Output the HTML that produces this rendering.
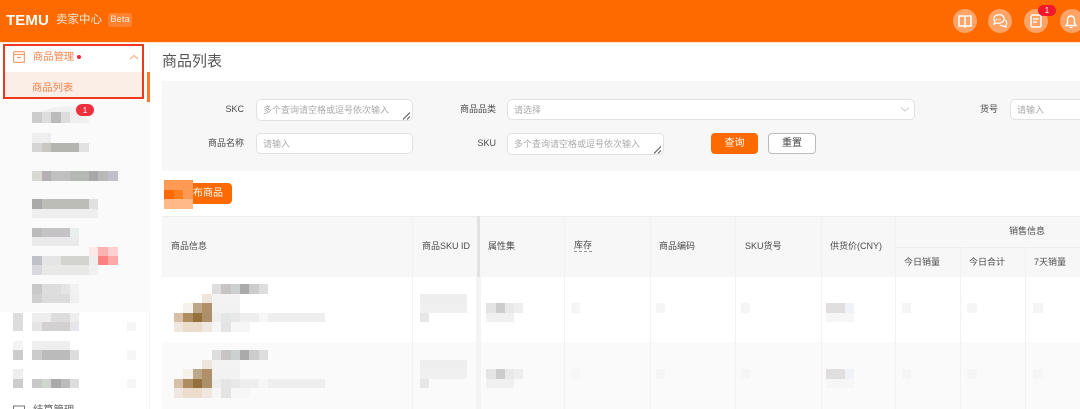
<!DOCTYPE html>
<html lang="zh"><head><meta charset="utf-8"><title>商品列表</title>
<style>
html,body{margin:0;padding:0;background:#fff}
#p{position:relative;width:1080px;height:409px;overflow:hidden;background:#fff;font-family:"Liberation Sans","Noto Sans CJK SC",sans-serif;color:#555;filter:blur(.35px)}
#p div,#p svg{position:absolute}
.t{white-space:nowrap;font-size:9px;line-height:12px;color:#4a4a4a}
.l{text-align:right;width:60px}
.i{background:#fff;border:1px solid #e2e2e2;border-radius:5px;box-sizing:border-box;color:#aaa;font-size:9px;line-height:20px;padding-left:6px;white-space:nowrap;overflow:hidden}
.v{top:216px;width:1px;height:193px;background:#f2f2f2}
.c{top:240px}
</style></head><body><div id="p">
<div style="left:0;top:0;width:1080px;height:42px;background:#ff6a00"></div>
<div style="left:0;top:42px;width:1080px;height:1px;background:#ffe3cf"></div>
<div class="t" style="left:6px;top:12px;font:bold 15px/17px 'Liberation Sans',sans-serif;color:#fff;letter-spacing:.1px">TEMU</div>
<div class="t" style="left:56px;top:12px;font-size:11.500px;line-height:17px;color:#ffe9d9">卖家中心</div>
<div class="t" style="left:108px;top:13px;width:24px;height:14px;background:#ff8230;border-radius:3px;color:#ffe9d9;font-size:9.500px;line-height:14px;text-align:center">Beta</div>
<svg style="left:950px;top:0" width="130" height="42" viewBox="950 0 130 42" fill="none">
<circle cx="965" cy="21" r="12" fill="#ffa366"/><circle cx="1000" cy="21" r="12" fill="#ffa366"/><circle cx="1036" cy="21" r="12" fill="#ffa366"/><circle cx="1072" cy="21" r="12" fill="#ffa366"/>
<path d="M959 16h5l1 1 1-1h5v10h-5l-1 1-1-1h-5zM965 17v9" stroke="#fff" stroke-width="1.600"/>
<path d="M995 16c3-2 8-2 9 2 1 3-3 6-7 5l-3 1 1-3c-2-1-1-4 0-5z" stroke="#fff" stroke-width="1.300"/><path d="M1005 20c2 1 2 4 1 5l0 2-3-1c-1 0-2 0-3-1" stroke="#fff" stroke-width="1.200"/>
<path d="M996 19.500h5" stroke="#fff" stroke-width="1.300" stroke-dasharray="1.200 1"/>
<rect x="1031" y="15" width="10" height="12" rx="1.500" stroke="#fff" stroke-width="1.500"/><path d="M1033 19h6M1033 22h4" stroke="#fff" stroke-width="1.200"/>
<path d="M1071 16c2.500 0 3.500 2 3.500 4.500v3l1.500 2h-10l1.500-2v-3c0-2.500 1-4.500 3.500-4.500z" stroke="#fff" stroke-width="1.500"/><path d="M1069.500 27.500h3" stroke="#fff" stroke-width="1.300"/>
</svg>
<div class="t" style="left:1038px;top:5px;width:18px;height:11px;border-radius:6px;background:#f0182d;color:#fff;font-size:8px;line-height:11px;text-align:center">1</div>

<div style="left:0;top:100px;width:149px;height:212px;background:#fafafa"></div>
<div style="left:149px;top:43px;width:1px;height:366px;background:#f5f5f5"></div>
<div style="left:147px;top:72px;width:3px;height:30px;background:#ff7a22"></div>
<div style="left:4px;top:72px;width:138px;height:26px;background:#fbeee6"></div>
<div style="left:3px;top:44px;width:141px;height:55px;box-sizing:border-box;border:2px solid #ee3a1c"></div>
<svg style="left:12px;top:50px" width="14" height="14" fill="none" stroke="#f2a070" stroke-width="1.200"><rect x="1.600" y="1.600" width="10.800" height="10.800" rx="1"/><path d="M1.600 4.500h10.800M5 7.500h4"/></svg>
<div class="t" style="left:33px;top:50px;font-size:10.300px;line-height:15px;color:#f5824a">商品管理</div>
<div style="left:77px;top:55px;width:4px;height:4px;border-radius:50%;background:#f0263a"></div>
<svg style="left:129px;top:54px" width="10" height="7" fill="none" stroke="#f8b48c" stroke-width="1.200"><path d="M1 5l4-3.500 4 3.500"/></svg>
<div class="t" style="left:32px;top:81px;font-size:10.300px;line-height:15px;color:#f5824a">商品列表</div>

<svg style="left:0;top:0" width="1080" height="409" shape-rendering="crispEdges">
<path d="M40 112q20-8 40-5l10 16H32z" fill="#f1f0f0"/>
<g>
<rect x="32" y="112" width="10" height="11" fill="#ccc"/><rect x="42" y="112" width="9" height="11" fill="#ddd"/><rect x="51" y="112" width="10" height="11" fill="#bbb"/><rect x="61" y="112" width="9" height="11" fill="#ddd"/><rect x="70" y="112" width="10" height="11" fill="#eee"/>
<rect x="32" y="133" width="19" height="10" fill="#eee"/><rect x="32" y="143" width="10" height="9" fill="#d5d5d5"/><rect x="42" y="143" width="9" height="9" fill="#c8c8c0"/><rect x="51" y="143" width="28" height="9" fill="#b5b5b0"/><rect x="79" y="143" width="10" height="9" fill="#e2e2e2"/>
<rect x="32" y="171" width="10" height="10" fill="#d8d8d4"/><rect x="42" y="171" width="9" height="10" fill="#b5b0b3"/><rect x="51" y="171" width="19" height="10" fill="#c0c0c0"/><rect x="70" y="171" width="19" height="10" fill="#b5b8b5"/><rect x="89" y="171" width="9" height="10" fill="#a8a8a8"/><rect x="98" y="171" width="10" height="10" fill="#b8b8b8"/><rect x="108" y="171" width="10" height="10" fill="#c0c0c8"/>
<rect x="32" y="199" width="10" height="10" fill="#aaa"/><rect x="42" y="199" width="47" height="10" fill="#bdbdb8"/><rect x="89" y="199" width="9" height="10" fill="#e0e0e0"/><rect x="32" y="209" width="66" height="9" fill="#eee"/>
<rect x="32" y="228" width="10" height="9" fill="#bbb"/><rect x="42" y="228" width="28" height="9" fill="#c5c3c5"/><rect x="70" y="228" width="9" height="9" fill="#eaeeee"/><rect x="32" y="237" width="47" height="9" fill="#eaeaea"/>
<rect x="89" y="247" width="9" height="9" fill="#fde8e8"/><rect x="98" y="247" width="10" height="9" fill="#ffb0b0"/><rect x="108" y="247" width="10" height="9" fill="#ffd0d0"/>
<rect x="32" y="256" width="10" height="9" fill="#c0c0c8"/><rect x="42" y="256" width="19" height="9" fill="#e5e5e5"/><rect x="61" y="256" width="28" height="9" fill="#d3d3d0"/><rect x="89" y="256" width="9" height="9" fill="#eee"/><rect x="98" y="256" width="10" height="9" fill="#ff8080"/><rect x="108" y="256" width="10" height="9" fill="#ffa8a8"/>
<rect x="32" y="265" width="10" height="10" fill="#d8d8de"/><rect x="42" y="265" width="47" height="10" fill="#e8e8e6"/><rect x="89" y="265" width="9" height="10" fill="#f0f0f0"/>
<rect x="32" y="284" width="10" height="10" fill="#c8c8c8"/><rect x="42" y="284" width="19" height="10" fill="#ddd"/><rect x="61" y="284" width="9" height="10" fill="#e5e5e5"/><rect x="70" y="284" width="9" height="10" fill="#f2f2f2"/>
<rect x="32" y="294" width="10" height="9" fill="#d0d0d0"/><rect x="42" y="294" width="28" height="9" fill="#dcdcdc"/><rect x="70" y="294" width="9" height="9" fill="#f0f0f0"/>
<rect x="13" y="313" width="10" height="18" fill="#ddd"/><rect x="32" y="313" width="19" height="9" fill="#eee"/><rect x="51" y="313" width="19" height="9" fill="#ddd"/><rect x="70" y="313" width="9" height="9" fill="#eee"/>
<rect x="32" y="322" width="10" height="9" fill="#e5e5e5"/><rect x="42" y="322" width="28" height="9" fill="#d2d0d0"/><rect x="70" y="322" width="9" height="9" fill="#e5e5ea"/><rect x="127" y="322" width="9" height="9" fill="#f6f6f6"/>
<rect x="13" y="341" width="10" height="9" fill="#f4f4f4"/><rect x="32" y="341" width="38" height="9" fill="#eee"/><rect x="13" y="350" width="10" height="10" fill="#ccc"/><rect x="32" y="350" width="10" height="10" fill="#ccc"/><rect x="42" y="350" width="28" height="10" fill="#bbb"/><rect x="70" y="350" width="9" height="10" fill="#ddd"/><rect x="127" y="350" width="9" height="10" fill="#f6f6f6"/>
<rect x="13" y="369" width="10" height="10" fill="#eee"/><rect x="13" y="379" width="10" height="9" fill="#ccc"/><rect x="32" y="379" width="10" height="9" fill="#c8c8c8"/><rect x="42" y="379" width="9" height="9" fill="#d0d5d0"/><rect x="51" y="379" width="10" height="9" fill="#aaa"/><rect x="61" y="379" width="9" height="9" fill="#bbb"/><rect x="70" y="379" width="9" height="9" fill="#ddd"/><rect x="127" y="379" width="9" height="9" fill="#f6f6f6"/>
</g>
</svg>
<div class="t" style="left:76px;top:104px;width:18px;height:12px;border-radius:6px;background:#f0303c;color:#fff;font-size:8.500px;line-height:12px;text-align:center">1</div>
<svg style="left:13px;top:405px" width="12" height="6" fill="none" stroke="#777"><rect x="0.500" y="1" width="11" height="10"/></svg>
<div class="t" style="left:33px;top:403px;font-size:10.300px;line-height:15px;color:#666">结算管理</div>

<div class="t" style="left:162px;top:51px;font-size:15px;line-height:21px;color:#555">商品列表</div>
<div style="left:162px;top:81px;width:918px;height:90px;background:#f7f7f7"></div>
<div class="t l" style="left:184px;top:103px">SKC</div>
<div class="t l" style="left:184px;top:137px">商品名称</div>
<div class="t l" style="left:436px;top:103px">商品品类</div>
<div class="t l" style="left:436px;top:137px">SKU</div>
<div class="t l" style="left:938px;top:103px">货号</div>
<div class="i" style="left:256px;top:99px;width:157px;height:22px">多个查询请空格或逗号依次输入</div>
<div class="i" style="left:256px;top:133px;width:157px;height:21px">请输入</div>
<div class="i" style="left:507px;top:99px;width:408px;height:21px">请选择</div>
<div class="i" style="left:507px;top:133px;width:157px;height:22px">多个查询请空格或逗号依次输入</div>
<div class="i" style="left:1010px;top:99px;width:90px;height:21px">请输入</div>
<svg style="left:402px;top:112px" width="9" height="8" stroke="#555" fill="none"><path d="M1 7.500l7-7M5 7.500l3-3"/></svg>
<svg style="left:653px;top:146px" width="9" height="8" stroke="#555" fill="none"><path d="M1 7.500l7-7M5 7.500l3-3"/></svg>
<svg style="left:900px;top:106px" width="10" height="7" stroke="#ccc" fill="none"><path d="M1 1.500l4 3.500 4-3.500"/></svg>
<div class="t" style="left:711px;top:133px;width:47px;height:21px;background:#ff6a00;border-radius:4px;color:#fff;font-size:10px;line-height:22px;text-align:center">查询</div>
<div class="t" style="left:768px;top:133px;width:48px;height:21px;box-sizing:border-box;background:#fff;border:1px solid #bbb;border-radius:4px;color:#444;font-size:10px;line-height:20px;text-align:center">重置</div>

<div style="left:162px;top:183px;width:70px;height:21px;background:#ff6a00;border-radius:4px"></div>
<div class="t" style="left:193px;top:187px;font-size:10px;line-height:14px;color:#fff">布商品</div>
<svg style="left:150px;top:176px" width="46" height="38" viewBox="150 176 46 38" shape-rendering="crispEdges">
<rect x="150" y="176" width="14" height="34" fill="#fff"/>
<rect x="164" y="180" width="29" height="10" fill="#ff9a55"/>
<rect x="164" y="190" width="10" height="9" fill="#ff6a00"/><rect x="174" y="190" width="9" height="9" fill="#ff7f20"/><rect x="183" y="190" width="10" height="9" fill="#ff9a55"/>
<rect x="164" y="199" width="29" height="10" fill="#ffb888"/>
</svg>

<div style="left:162px;top:216px;width:918px;height:61px;background:#f7f7f7"></div>
<div style="left:162px;top:216px;width:918px;height:1px;background:#eee"></div>
<div style="left:162px;top:342px;width:918px;height:67px;background:#fafafa"></div>
<div style="left:895px;top:247px;width:185px;height:1px;background:#ececec"></div>
<div class="v" style="left:412px"></div><div class="v" style="left:564px"></div><div class="v" style="left:650px"></div><div class="v" style="left:735px"></div><div class="v" style="left:821px"></div><div class="v" style="left:895px"></div>
<div class="v" style="left:960px;top:247px;height:162px"></div><div class="v" style="left:1025px;top:247px;height:162px"></div>
<div style="left:477px;top:216px;width:3px;height:61px;background:#e2e2e2"></div>
<div style="left:476px;top:277px;width:5px;height:132px;background:#f4f4f4"></div>
<div class="t c" style="left:171px">商品信息</div>
<div class="t c" style="left:422px">商品SKU ID</div>
<div class="t c" style="left:488px">属性集</div>
<div class="t c" style="left:574px;border-bottom:1px dashed #999;line-height:11px">库存</div>
<div class="t c" style="left:659px">商品编码</div>
<div class="t c" style="left:745px">SKU货号</div>
<div class="t c" style="left:830px">供货价(CNY)</div>
<div class="t" style="left:1009px;top:225px">销售信息</div>
<div class="t" style="left:904px;top:256px">今日销量</div>
<div class="t" style="left:969px;top:256px">今日合计</div>
<div class="t" style="left:1034px;top:256px">7天销量</div>

<svg style="left:0;top:0" width="1080" height="409" shape-rendering="crispEdges">
<defs><g id="r">
<rect x="212" y="284" width="9" height="10" fill="#ddd"/><rect x="221" y="284" width="10" height="10" fill="#c8c4c4"/><rect x="231" y="284" width="9" height="10" fill="#cdd0d0"/><rect x="240" y="284" width="9" height="10" fill="#aaa"/><rect x="249" y="284" width="10" height="10" fill="#ccc"/><rect x="259" y="284" width="9" height="10" fill="#ddd"/>
<rect x="202" y="294" width="10" height="9" fill="#eee6dc"/><rect x="212" y="294" width="28" height="9" fill="#f3f3f3"/>
<rect x="183" y="303" width="10" height="10" fill="#f6f2ea"/><rect x="193" y="303" width="9" height="10" fill="#bca888"/><rect x="202" y="303" width="10" height="10" fill="#b09068"/><rect x="212" y="303" width="28" height="10" fill="#f2f2f2"/>
<rect x="174" y="313" width="9" height="9" fill="#d8c0a8"/><rect x="183" y="313" width="10" height="9" fill="#ae8e60"/><rect x="193" y="313" width="9" height="9" fill="#94703c"/><rect x="202" y="313" width="10" height="9" fill="#ae9068"/><rect x="212" y="313" width="9" height="9" fill="#eee"/><rect x="221" y="313" width="10" height="9" fill="#e4e6e6"/><rect x="231" y="313" width="9" height="9" fill="#e8e8e8"/><rect x="240" y="313" width="19" height="9" fill="#eee"/><rect x="259" y="313" width="9" height="9" fill="#f6f6f6"/><rect x="268" y="313" width="57" height="9" fill="#eee"/>
<rect x="174" y="322" width="9" height="10" fill="#f0e8e0"/><rect x="183" y="322" width="19" height="10" fill="#ecdccc"/><rect x="202" y="322" width="10" height="10" fill="#f0e8e0"/><rect x="212" y="322" width="9" height="10" fill="#f6f6f6"/><rect x="221" y="322" width="10" height="10" fill="#e4e4e4"/><rect x="231" y="322" width="19" height="10" fill="#f6f6f6"/>
<rect x="420" y="294" width="47" height="9" fill="#eee"/><rect x="420" y="303" width="47" height="10" fill="#f0f0f0"/><rect x="420" y="313" width="9" height="9" fill="#e6e8e8"/>
<rect x="486" y="303" width="10" height="10" fill="#e4e4e4"/><rect x="496" y="303" width="9" height="10" fill="#ccc"/><rect x="505" y="303" width="9" height="10" fill="#e8e8e8"/><rect x="514" y="303" width="9" height="10" fill="#eee"/><rect x="486" y="313" width="28" height="9" fill="#f0f0f0"/>
<rect x="571" y="303" width="9" height="10" fill="#f6f6f6"/><rect x="656" y="303" width="9" height="10" fill="#f5f5f5"/><rect x="741" y="303" width="9" height="10" fill="#f5f5f5"/>
<rect x="826" y="303" width="19" height="10" fill="#e0dede"/><rect x="845" y="303" width="9" height="10" fill="#f0f2f8"/><rect x="826" y="313" width="28" height="9" fill="#f6f6f6"/>
<rect x="902" y="303" width="9" height="10" fill="#f5f5f5"/><rect x="967" y="303" width="10" height="10" fill="#f5f5f5"/><rect x="1033" y="303" width="10" height="10" fill="#f5f5f5"/>
</g></defs>
<use href="#r"/><use href="#r" y="66"/>
</svg>
</div></body></html>
